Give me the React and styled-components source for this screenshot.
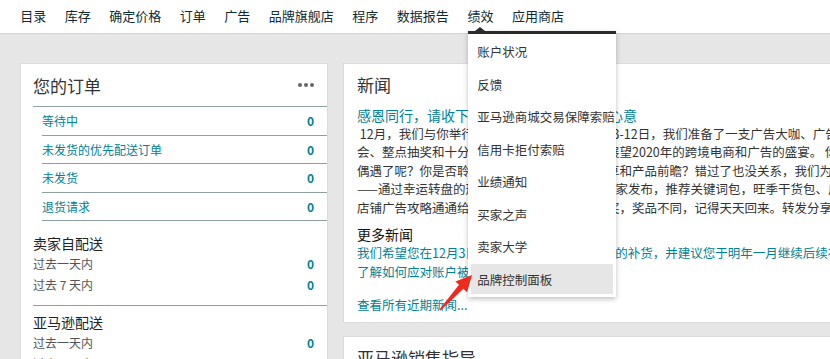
import styled, { createGlobalStyle } from "styled-components"

const GlobalStyle = createGlobalStyle`
  body {
    margin: 0;
    overflow: hidden;
    background: #e6e6e6;
    font-family: "Noto Sans CJK SC", "Noto Sans", sans-serif;
    color: #333;
  }
  * { box-sizing: border-box; }
`

const Page = styled.div`
  position: relative;
  width: 830px;
  height: 359px;
  overflow: hidden;
`

const TopNav = styled.nav`
  height: 34px;
  background: #fff;
  border-bottom: 1px solid #d3d3d3;
  display: flex;
  align-items: stretch;
  padding-left: 11px;
`

const NavItem = styled.div`
  position: relative;
  display: flex;
  align-items: center;
  padding: 0 9.25px 2px;
  font-size: 13px;
  color: #0f2b30;
  white-space: nowrap;
`

const Dropdown = styled.div`
  position: absolute;
  top: 31px;
  left: 10px;
  width: 148px;
  background: #fff;
  border-top: 3px solid #2b2b2b;
  box-shadow: 0 2px 5px rgba(0, 0, 0, 0.25);
  padding-bottom: 3px;
  z-index: 5;

  &::before {
    content: '';
    position: absolute;
    top: -7px;
    left: 7px;
    border-left: 5px solid transparent;
    border-right: 5px solid transparent;
    border-bottom: 4px solid #2b2b2b;
  }
`

const DropItem = styled.div`
  height: 30px;
  margin: 2.5px 3px 0;
  padding-left: 6px;
  display: flex;
  align-items: center;
  font-size: 12.5px;
  color: #333;
  background: ${p => (p.$active ? "#e6e6e6" : "transparent")};
`

const Main = styled.main`
  display: flex;
  align-items: flex-start;
  gap: 15px;
  padding: 29px 20px 0;
`

const Card = styled.section`
  background: #fff;
  border: 1px solid #dcdcdc;
`

const OrdersCard = styled(Card)`
  width: 308px;
  flex: none;
  padding-left: 12px;
  padding-bottom: 40px;
`

const CardHead = styled.div`
  height: 43px;
  display: flex;
  align-items: center;
  justify-content: space-between;
  padding-right: 12px;
  border-bottom: ${p => (p.$rule ? "1px solid #8fa19f" : "none")};
`

const CardTitle = styled.h2`
  margin: 0;
  font-size: 17px;
  font-weight: 400;
  color: #333;
`

const Dots = styled.span`
  display: flex;
  gap: 2px;
  margin-right: 1px;

  i {
    width: 4px;
    height: 4px;
    border-radius: 50%;
    background: #666;
  }
`

const OrderList = styled.div`
  margin-left: 9px;
`

const OrderRow = styled.div`
  height: 28.5px;
  display: flex;
  align-items: center;
  justify-content: space-between;
  padding-right: 13px;
  border-bottom: 1px solid #8fa19f;
  font-size: 12px;
  color: #008296;
`

const Count = styled.span`
  font-size: 12px;
  font-weight: 700;
  color: #008296;
`

const Section = styled.div`
  padding: ${p => p.$top}px 13px 10px 0;
  border-bottom: 1px solid #8fa19f;
`

const SectionTitle = styled.div`
  font-size: 14px;
  line-height: 20px;
  color: #222;
`

const StatRow = styled.div`
  height: 21px;
  display: flex;
  align-items: center;
  justify-content: space-between;
  font-size: 12px;
  color: #555;
`

const RightCol = styled.div`
  width: 560px;
  flex: none;
  display: flex;
  flex-direction: column;
  gap: 13px;
`

const NewsCard = styled(Card)`
  padding: 0 13px 7px;
  overflow: hidden;
`

const NewsTitle = styled.h2`
  margin: 0;
  padding-top: 9px;
  height: 42px;
  font-size: 17px;
  line-height: 24px;
  font-weight: 400;
  color: #333;
`

const Lines = styled.div`
  white-space: nowrap;
  font-size: 12.5px;
  line-height: 18.5px;
  color: #333;
`

const LinkLine = styled.div`
  white-space: nowrap;
  font-size: ${p => p.$size || 12.5}px;
  line-height: 18.5px;
  margin-top: ${p => p.$gap || 0}px;
  color: #008296;
`

const SubTitle = styled.div`
  margin-top: 7px;
  font-size: 14px;
  line-height: 20px;
  color: #111;
`

const Arrow = styled.svg`
  position: absolute;
  left: 436px;
  top: 270px;
  z-index: 6;
`

const navItems = ["目录", "库存", "确定价格", "订单", "广告", "品牌旗舰店", "程序", "数据报告", "绩效", "应用商店"]
const menuItems = ["账户状况", "反馈", "亚马逊商城交易保障索赔", "信用卡拒付索赔", "业绩通知", "买家之声", "卖家大学", "品牌控制面板"]
const orders = ["等待中", "未发货的优先配送订单", "未发货", "退货请求"]

export default function App() {
  return (
    <Page>
      <GlobalStyle />
      <TopNav>
        {navItems.map(item => (
          <NavItem key={item}>
            {item}
            {item === "绩效" && (
              <Dropdown>
                {menuItems.map(m => (
                  <DropItem key={m} $active={m === "品牌控制面板"}>{m}</DropItem>
                ))}
              </Dropdown>
            )}
          </NavItem>
        ))}
      </TopNav>

      <Main>
        <OrdersCard>
          <CardHead $rule>
            <CardTitle>您的订单</CardTitle>
            <Dots><i /><i /><i /></Dots>
          </CardHead>
          <OrderList>
            {orders.map(o => (
              <OrderRow key={o}>
                <span>{o}</span>
                <Count>0</Count>
              </OrderRow>
            ))}
          </OrderList>
          <Section $top={12}>
            <SectionTitle>卖家自配送</SectionTitle>
            <StatRow><span>过去一天内</span><Count>0</Count></StatRow>
            <StatRow><span>过去 7 天内</span><Count>0</Count></StatRow>
          </Section>
          <Section $top={6}>
            <SectionTitle>亚马逊配送</SectionTitle>
            <StatRow><span>过去一天内</span><Count>0</Count></StatRow>
            <StatRow><span>过去 7 天内</span><Count>0</Count></StatRow>
          </Section>
        </OrdersCard>

        <RightCol>
          <NewsCard>
            <NewsTitle>新闻</NewsTitle>
            <LinkLine $size={14}>感恩同行，请收下亚马逊广告送上的一份心意</LinkLine>
            <Lines>
              &nbsp;12月，我们与你举行了一场感恩季活动，12月3-12日，我们准备了一支广告大咖、广告经理的直播分享会、<br />
              会、整点抽奖和十分诚意的惊喜礼物，一起来展望2020年的跨境电商和广告的盛宴。 你想了解更多吗？<br />
              偶遇了呢？你是否聆听了广告大咖们的干货分享和产品前瞻？错过了也没关系，我们为你准备了<br />
              ——通过幸运转盘的形式，每天赢亚马逊广告独家发布，推荐关键词包，旺季干货包、广告报告<br />
              店铺广告攻略通通给你带回家。每天都可以抽奖，奖品不同，记得天天回来。转发分享给你的朋友
            </Lines>
            <SubTitle>更多新闻</SubTitle>
            <LinkLine>我们希望您在12月3日前完成所有节日旺季库存的补货，并建议您于明年一月继续后续补货。</LinkLine>
            <LinkLine>了解如何应对账户被暂停</LinkLine>
            <LinkLine $gap={15}>查看所有近期新闻...</LinkLine>
          </NewsCard>
          <NewsCard>
            <NewsTitle>亚马逊销售指导</NewsTitle>
            <Lines>&nbsp;</Lines>
          </NewsCard>
        </RightCol>
      </Main>

      <Arrow width="40" height="44" viewBox="0 0 40 44">
        <polygon
          points="36,5 31.1,22.2 27.4,18.8 4.6,40.6 3.4,39.4 23,14.8 19.3,11.4"
          fill="#f0291f"
        />
      </Arrow>
    </Page>
  )
}
